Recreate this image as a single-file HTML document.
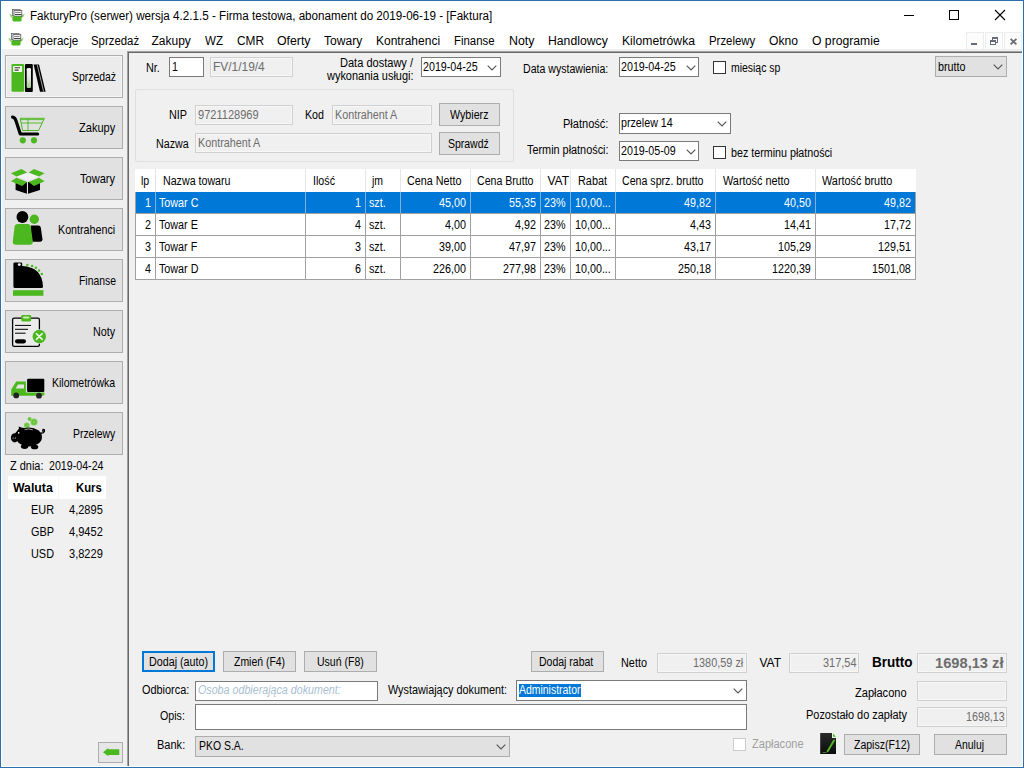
<!DOCTYPE html><html><head><meta charset="utf-8"><title>FakturyPro</title><style>
html,body{margin:0;padding:0;}body{width:1024px;height:768px;position:relative;overflow:hidden;background:#f0f0f0;font-family:"Liberation Sans", sans-serif;font-size:11px;color:#000;}
.b{position:absolute;box-sizing:border-box;}
.t{position:absolute;white-space:nowrap;line-height:1;transform-origin:0 0;}
svg{position:absolute;overflow:visible;}
</style></head><body>
<div class="b" style="left:0px;top:0px;width:1024px;height:49px;background:#fff;"></div>
<div class="b" style="left:0px;top:0px;width:1024px;height:1px;background:#2b70aa;"></div>
<div class="b" style="left:0px;top:0px;width:1px;height:768px;background:#2b70aa;"></div>
<div class="b" style="left:1023px;top:0px;width:1px;height:768px;background:#2b70aa;"></div>
<div class="b" style="left:0px;top:767px;width:1024px;height:1px;background:#2b70aa;"></div>
<svg style="left:900px;top:5px" width="120" height="22" viewBox="0 0 120 22"><g stroke="#000" stroke-width="1" fill="none" shape-rendering="crispEdges"><path d="M4 10.5H14"/><rect x="49.5" y="5.5" width="9" height="9"/></g><path d="M95 5L105 15M105 5L95 15" stroke="#000" stroke-width="1.1" fill="none"/></svg>
<div class="b" style="left:966px;top:32px;width:18px;height:18px;background:#fcfcfc;border:1px solid #ececec;"></div>
<div class="b" style="left:985px;top:32px;width:18px;height:18px;background:#fcfcfc;border:1px solid #ececec;"></div>
<div class="b" style="left:1004px;top:32px;width:18px;height:18px;background:#fcfcfc;border:1px solid #ececec;"></div>
<svg style="left:966px;top:32px" width="58" height="18" viewBox="966 32 58 18"><g fill="#666d77"><rect x="971" y="43" width="6" height="2"/></g><g stroke="#666d77" fill="none" stroke-width="1" shape-rendering="crispEdges"><path d="M992.5 40V37.5H997.5V42.5H996"/><path d="M992 38.5H998"/><rect x="990.5" y="40.5" width="5" height="4"/><path d="M990 41.5H996"/></g><path d="M1010.6 38.8L1016.4 44.4M1016.4 38.8L1010.6 44.4" stroke="#666d77" stroke-width="1.8" fill="none"/></svg>
<div class="b" style="left:127px;top:51px;width:896px;height:1px;background:#a0a0a0;"></div>
<div class="b" style="left:127px;top:51px;width:1px;height:716px;background:#a0a0a0;"></div>
<div class="b" style="left:128px;top:52px;width:895px;height:1px;background:#696969;"></div>
<div class="b" style="left:128px;top:52px;width:1px;height:714px;background:#696969;"></div>
<div class="b" style="left:1022px;top:51px;width:1px;height:716px;background:#fff;"></div>
<div class="b" style="left:127px;top:766px;width:896px;height:1px;background:#fff;"></div>
<div class="b" style="left:5px;top:55px;width:118px;height:43px;background:#ebebeb;border:1px solid #adadad;box-shadow:inset 0 0 0 1px #f6f6f6;"></div>
<div class="b" style="left:5px;top:106px;width:118px;height:43px;background:#e1e1e1;border:1px solid #adadad;"></div>
<div class="b" style="left:5px;top:157px;width:118px;height:43px;background:#e1e1e1;border:1px solid #adadad;"></div>
<div class="b" style="left:5px;top:208px;width:118px;height:43px;background:#e1e1e1;border:1px solid #adadad;"></div>
<div class="b" style="left:5px;top:259px;width:118px;height:43px;background:#e1e1e1;border:1px solid #adadad;"></div>
<div class="b" style="left:5px;top:310px;width:118px;height:43px;background:#e1e1e1;border:1px solid #adadad;"></div>
<div class="b" style="left:5px;top:361px;width:118px;height:43px;background:#e1e1e1;border:1px solid #adadad;"></div>
<div class="b" style="left:5px;top:412px;width:118px;height:43px;background:#e1e1e1;border:1px solid #adadad;"></div>
<div class="b" style="left:98px;top:742px;width:25px;height:21px;background:#e6e6e6;border:1px solid #adadad;"></div>
<svg style="left:103px;top:747px" width="17" height="10" viewBox="103 747 17 10"><path d="M103 752.2L108.3 748V749.2H119.3V755H108.3V756.2Z" fill="#4cb81f"/></svg>
<div class="b" style="left:8px;top:476px;width:98px;height:23px;background:#fff;"></div>
<div class="b" style="left:58px;top:476px;width:1px;height:23px;background:#f6f6f6;"></div>
<div class="b" style="left:169px;top:57px;width:35px;height:20px;background:#fff;border:1px solid #7a7a7a;"></div>
<div class="b" style="left:210px;top:57px;width:83px;height:20px;background:#f0f0f0;border:1px solid #d0d0d0;box-shadow:inset 0 0 0 1px #f7f7f7;"></div>
<div class="b" style="left:421px;top:57px;width:80px;height:20px;background:#fff;border:1px solid #7a7a7a;"></div>
<svg style="left:487px;top:64.5px" width="10" height="6" viewBox="0 0 10 6"><path d="M0.7 0.7L5 5L9.3 0.7" stroke="#555" stroke-width="1.15" fill="none"/></svg>
<div class="b" style="left:619px;top:57px;width:80px;height:20px;background:#fff;border:1px solid #7a7a7a;"></div>
<svg style="left:685.5px;top:64.5px" width="10" height="6" viewBox="0 0 10 6"><path d="M0.7 0.7L5 5L9.3 0.7" stroke="#555" stroke-width="1.15" fill="none"/></svg>
<div class="b" style="left:713px;top:61px;width:13px;height:13px;background:#fff;border:1px solid #333;"></div>
<div class="b" style="left:935px;top:56px;width:72px;height:21px;background:#e1e1e1;border:1px solid #adadad;"></div>
<svg style="left:993px;top:64px" width="10" height="6" viewBox="0 0 10 6"><path d="M0.7 0.7L5 5L9.3 0.7" stroke="#555" stroke-width="1.15" fill="none"/></svg>
<div class="b" style="left:135px;top:89px;width:379px;height:73px;border:1px solid #dfdfdf;border-radius:2px;"></div>
<div class="b" style="left:195px;top:105px;width:98px;height:20px;background:#f0f0f0;border:1px solid #d0d0d0;box-shadow:inset 0 0 0 1px #f7f7f7;"></div>
<div class="b" style="left:332px;top:105px;width:100px;height:20px;background:#f0f0f0;border:1px solid #d0d0d0;box-shadow:inset 0 0 0 1px #f7f7f7;"></div>
<div class="b" style="left:195px;top:133px;width:237px;height:20px;background:#f0f0f0;border:1px solid #d0d0d0;box-shadow:inset 0 0 0 1px #f7f7f7;"></div>
<div class="b" style="left:439px;top:103px;width:61px;height:23px;background:#e1e1e1;border:1px solid #adadad;"></div>
<div class="b" style="left:439px;top:132px;width:61px;height:23px;background:#e1e1e1;border:1px solid #adadad;"></div>
<div class="b" style="left:619px;top:113px;width:112px;height:21px;background:#fff;border:1px solid #7a7a7a;"></div>
<svg style="left:717px;top:121px" width="10" height="6" viewBox="0 0 10 6"><path d="M0.7 0.7L5 5L9.3 0.7" stroke="#555" stroke-width="1.15" fill="none"/></svg>
<div class="b" style="left:619px;top:141px;width:80px;height:20px;background:#fff;border:1px solid #7a7a7a;"></div>
<svg style="left:685.5px;top:148.5px" width="10" height="6" viewBox="0 0 10 6"><path d="M0.7 0.7L5 5L9.3 0.7" stroke="#555" stroke-width="1.15" fill="none"/></svg>
<div class="b" style="left:713px;top:146px;width:13px;height:13px;background:#fff;border:1px solid #333;"></div>
<div class="b" style="left:135px;top:169px;width:781px;height:23px;background:#fff;"></div>
<div class="b" style="left:135px;top:192px;width:781px;height:88px;background:#fff;"></div>
<div class="b" style="left:136px;top:192px;width:779px;height:22px;background:#0078d7;"></div>
<div class="b" style="left:155px;top:169px;width:1px;height:23px;background:#e5e5e5;"></div>
<div class="b" style="left:305px;top:169px;width:1px;height:23px;background:#e5e5e5;"></div>
<div class="b" style="left:365px;top:169px;width:1px;height:23px;background:#e5e5e5;"></div>
<div class="b" style="left:400px;top:169px;width:1px;height:23px;background:#e5e5e5;"></div>
<div class="b" style="left:470px;top:169px;width:1px;height:23px;background:#e5e5e5;"></div>
<div class="b" style="left:540px;top:169px;width:1px;height:23px;background:#e5e5e5;"></div>
<div class="b" style="left:570px;top:169px;width:1px;height:23px;background:#e5e5e5;"></div>
<div class="b" style="left:615px;top:169px;width:1px;height:23px;background:#e5e5e5;"></div>
<div class="b" style="left:715px;top:169px;width:1px;height:23px;background:#e5e5e5;"></div>
<div class="b" style="left:815px;top:169px;width:1px;height:23px;background:#e5e5e5;"></div>
<div class="b" style="left:135px;top:192px;width:1px;height:88px;background:#a0a0a0;"></div>
<div class="b" style="left:155px;top:192px;width:1px;height:88px;background:#a0a0a0;"></div>
<div class="b" style="left:305px;top:192px;width:1px;height:88px;background:#a0a0a0;"></div>
<div class="b" style="left:365px;top:192px;width:1px;height:88px;background:#a0a0a0;"></div>
<div class="b" style="left:400px;top:192px;width:1px;height:88px;background:#a0a0a0;"></div>
<div class="b" style="left:470px;top:192px;width:1px;height:88px;background:#a0a0a0;"></div>
<div class="b" style="left:540px;top:192px;width:1px;height:88px;background:#a0a0a0;"></div>
<div class="b" style="left:570px;top:192px;width:1px;height:88px;background:#a0a0a0;"></div>
<div class="b" style="left:615px;top:192px;width:1px;height:88px;background:#a0a0a0;"></div>
<div class="b" style="left:715px;top:192px;width:1px;height:88px;background:#a0a0a0;"></div>
<div class="b" style="left:815px;top:192px;width:1px;height:88px;background:#a0a0a0;"></div>
<div class="b" style="left:915px;top:192px;width:1px;height:88px;background:#a0a0a0;"></div>
<div class="b" style="left:155px;top:192px;width:1px;height:21px;background:#7fb0e0;"></div>
<div class="b" style="left:305px;top:192px;width:1px;height:21px;background:#7fb0e0;"></div>
<div class="b" style="left:365px;top:192px;width:1px;height:21px;background:#7fb0e0;"></div>
<div class="b" style="left:400px;top:192px;width:1px;height:21px;background:#7fb0e0;"></div>
<div class="b" style="left:470px;top:192px;width:1px;height:21px;background:#7fb0e0;"></div>
<div class="b" style="left:540px;top:192px;width:1px;height:21px;background:#7fb0e0;"></div>
<div class="b" style="left:570px;top:192px;width:1px;height:21px;background:#7fb0e0;"></div>
<div class="b" style="left:615px;top:192px;width:1px;height:21px;background:#7fb0e0;"></div>
<div class="b" style="left:715px;top:192px;width:1px;height:21px;background:#7fb0e0;"></div>
<div class="b" style="left:815px;top:192px;width:1px;height:21px;background:#7fb0e0;"></div>
<div class="b" style="left:135px;top:213px;width:781px;height:1px;background:#a0a0a0;"></div>
<div class="b" style="left:135px;top:235px;width:781px;height:1px;background:#a0a0a0;"></div>
<div class="b" style="left:135px;top:257px;width:781px;height:1px;background:#a0a0a0;"></div>
<div class="b" style="left:135px;top:279px;width:781px;height:1px;background:#a0a0a0;"></div>
<div class="b" style="left:142px;top:651px;width:73px;height:21px;background:#e1e1e1;border:2px solid #0078d7;"></div>
<div class="b" style="left:223px;top:651px;width:73px;height:21px;background:#e1e1e1;border:1px solid #adadad;"></div>
<div class="b" style="left:304px;top:651px;width:73px;height:21px;background:#e1e1e1;border:1px solid #adadad;"></div>
<div class="b" style="left:531px;top:651px;width:73px;height:21px;background:#e1e1e1;border:1px solid #adadad;"></div>
<div class="b" style="left:657px;top:653px;width:90px;height:20px;background:#f0f0f0;border:1px solid #d0d0d0;box-shadow:inset 0 0 0 1px #f7f7f7;"></div>
<div class="b" style="left:789px;top:653px;width:70px;height:20px;background:#f0f0f0;border:1px solid #d0d0d0;box-shadow:inset 0 0 0 1px #f7f7f7;"></div>
<div class="b" style="left:917px;top:653px;width:90px;height:20px;background:#f0f0f0;border:1px solid #d0d0d0;box-shadow:inset 0 0 0 1px #f7f7f7;"></div>
<div class="b" style="left:195px;top:681px;width:183px;height:20px;background:#fff;border:1px solid #7a7a7a;"></div>
<div class="b" style="left:516px;top:680px;width:231px;height:21px;background:#fff;border:1px solid #7a7a7a;"></div>
<div class="b" style="left:519px;top:684px;width:62px;height:13px;background:#0078d7;"></div>
<svg style="left:733px;top:688px" width="10" height="6" viewBox="0 0 10 6"><path d="M0.7 0.7L5 5L9.3 0.7" stroke="#555" stroke-width="1.15" fill="none"/></svg>
<div class="b" style="left:917px;top:681px;width:90px;height:20px;background:#f0f0f0;border:1px solid #d0d0d0;box-shadow:inset 0 0 0 1px #f7f7f7;"></div>
<div class="b" style="left:195px;top:704px;width:552px;height:26px;background:#fff;border:1px solid #7a7a7a;"></div>
<div class="b" style="left:917px;top:707px;width:90px;height:20px;background:#f0f0f0;border:1px solid #d0d0d0;box-shadow:inset 0 0 0 1px #f7f7f7;"></div>
<div class="b" style="left:195px;top:736px;width:315px;height:21px;background:#e1e1e1;border:1px solid #adadad;"></div>
<svg style="left:496px;top:744px" width="10" height="6" viewBox="0 0 10 6"><path d="M0.7 0.7L5 5L9.3 0.7" stroke="#555" stroke-width="1.15" fill="none"/></svg>
<div class="b" style="left:733px;top:738px;width:13px;height:13px;background:#fff;border:1px solid #cccccc;"></div>
<div class="b" style="left:844px;top:734px;width:76px;height:21px;background:#e1e1e1;border:1px solid #adadad;"></div>
<div class="b" style="left:934px;top:734px;width:73px;height:21px;background:#e1e1e1;border:1px solid #adadad;"></div>
<div class="b" style="left:1px;top:50px;width:1px;height:717px;background:#fff;"></div>
<div class="b" style="left:1px;top:766px;width:1022px;height:1px;background:#fff;"></div>
<svg style="left:8px;top:60px" width="44" height="36" viewBox="8 60 44 36">
<rect x="11.5" y="64" width="12.7" height="27.8" rx="1.3" fill="#4cb81f"/>
<rect x="13.1" y="65.9" width="9" height="6.2" rx="0.8" fill="#f4fbef"/>
<path d="M14.6 67.7H20M14.6 70.1H18.6" stroke="#333" stroke-width="1.1"/>
<rect x="25" y="64" width="7.8" height="28" rx="1" fill="#000"/>
<defs><linearGradient id="sg" x1="0" y1="0" x2="0" y2="1"><stop offset="0" stop-color="#f2f2f2"/><stop offset="0.5" stop-color="#e2e6df"/><stop offset="1" stop-color="#9fd388"/></linearGradient></defs><rect x="26.7" y="68" width="4.3" height="20" rx="1.2" fill="url(#sg)"/>
<path d="M33.6 64.5L39 64.5L45.6 91.8L40 91.8Z" fill="#000"/>
<path d="M37.3 65L43.6 91.5" stroke="#e8e8e8" stroke-width="0.7"/>
</svg>
<svg style="left:8px;top:110px" width="44" height="36" viewBox="8 110 44 36">
<path d="M12.6 117.2C15.2 117.4 15.6 119.4 16.4 122L20.3 134H37.6" stroke="#000" stroke-width="3.2" fill="none" stroke-linecap="round" stroke-linejoin="round"/>
<path d="M20.2 118.3H44.4L38.6 130.5H22.6Z" stroke="#4cb81f" stroke-width="1" fill="none"/>
<path d="M20.6 119.6H43.6M21.4 123H42.2M28 119V130.5" stroke="#4cb81f" stroke-width="0.9" fill="none"/>
<circle cx="22.8" cy="140.3" r="3.1" fill="#4cb81f"/><circle cx="34" cy="140.3" r="3.1" fill="#4cb81f"/>
</svg>
<svg style="left:8px;top:165px" width="44" height="32" viewBox="8 165 44 32">
<path d="M15.6 181.5V190L26.9 193.8V182Z M28 182V193.8L40 190V181.5Z" fill="#000"/>
<path d="M16.5 176.6L27.9 172.9L39 176.6L27.9 180.6Z" fill="#f2f2f2"/>
<path d="M10.9 173.2L21.5 169.1L27.1 172.6L16.5 176.4Z" fill="#4cb81f"/>
<path d="M28.7 172.6L34 169.1L44.6 173.2L39 176.4Z" fill="#4cb81f"/>
<path d="M10.9 181.3L16.5 177.8L27.1 182L22.1 186Z" fill="#4cb81f"/>
<path d="M28.7 182L39 177.8L44.6 181.3L34 186Z" fill="#4cb81f"/>
</svg>
<svg style="left:8px;top:208px" width="44" height="40" viewBox="8 208 44 40">
<path d="M31 225.4H38.4Q40.4 225.4 40.8 227.4L42.5 239.6Q42.6 241.7 40.4 241.7H31Z" fill="#000"/>
<circle cx="34.3" cy="219.2" r="4.7" fill="#4cb81f"/>
<path d="M17.8 223.9H27.6Q30.4 223.9 30.8 226.6L32.8 241.6Q33 244.8 29.8 244.8H15.8Q12.6 244.8 12.8 241.6L14.6 226.6Q15 223.9 17.8 223.9Z" fill="#4cb81f"/>
<circle cx="22.4" cy="217" r="5.9" fill="#000"/>
</svg>
<svg style="left:8px;top:260px" width="44" height="38" viewBox="8 260 44 38">
<path d="M14.8 262.4H20.8Q22.2 262.4 22.2 263.8V266Q42 267 43 286.4Q43 287.9 41.6 287.9H14.8Q13.4 287.9 13.4 286.4V263.8Q13.4 262.4 14.8 262.4Z" fill="#000"/>
<ellipse cx="19.3" cy="264.6" rx="1.5" ry="1.3" fill="#f0f0f0"/>
<g fill="#4cb81f"><circle cx="27.4" cy="264.9" r="1.25"/><circle cx="32.1" cy="265.9" r="1.25"/><circle cx="35.9" cy="267.8" r="1.25"/><circle cx="39" cy="270.6" r="1.25"/><circle cx="41.8" cy="274" r="1.25"/></g>
<rect x="13" y="290.2" width="30.4" height="5.6" fill="#4cb81f"/>
</svg>
<svg style="left:8px;top:312px" width="44" height="38" viewBox="8 312 44 38">
<rect x="12.6" y="318.2" width="26.8" height="28.2" rx="1.6" fill="#ececec" stroke="#000" stroke-width="1.3"/>
<rect x="21.2" y="315" width="10" height="6.5" rx="1.4" fill="#4cb81f"/>
<rect x="23" y="316.6" width="6.4" height="1.9" rx="0.9" fill="#c9efb4"/>
<path d="M15 325.4H31M15 329.3H28M15 333.2H25.6" stroke="#000" stroke-width="1"/>
<rect x="15" y="339.3" width="11" height="4.1" rx="2.05" fill="#000"/>
<circle cx="39.3" cy="336.5" r="7.2" fill="#e4e4e4"/>
<circle cx="39.3" cy="336.5" r="6.7" fill="#4cb81f"/>
<path d="M36.4 333.6L42.2 339.4M42.2 333.6L36.4 339.4" stroke="#eaf7e2" stroke-width="1.5" stroke-linecap="round"/>
</svg>
<svg style="left:8px;top:375px" width="44" height="26" viewBox="8 375 44 26">
<path d="M11.2 389.4L16.2 381.6H25.9V392.4H44.2L44.6 394.6L43 395.8H11.2Z" fill="#4cb81f"/>
<path d="M15.6 388.4L18 384.4H24V388.4Z" fill="#e6e6e6"/>
<rect x="27.1" y="378.8" width="17.2" height="13.1" rx="1" fill="#000"/>
<circle cx="16.2" cy="395.4" r="2.9" fill="#222"/><circle cx="39" cy="395.7" r="2.9" fill="#222"/>
</svg>
<svg style="left:8px;top:414px" width="44" height="38" viewBox="8 414 44 38">
<circle cx="26.8" cy="425.4" r="2.8" fill="#7ccf52"/><circle cx="26.8" cy="425.4" r="1.5" fill="none" stroke="#55b92a" stroke-width="0.6"/>
<circle cx="29.6" cy="418.9" r="2" fill="#6cc840"/>
<circle cx="34" cy="422" r="3.5" fill="#7ccf52"/><circle cx="34" cy="422" r="2" fill="none" stroke="#55b92a" stroke-width="0.7"/>
<ellipse cx="29" cy="437" rx="13" ry="9.6" fill="#000"/>
<ellipse cx="14.7" cy="437.8" rx="3.8" ry="4.6" fill="#000"/>
<path d="M15 433.5L19 428.5L18.6 426.6L21.4 427.6L26 428.5V436H15Z" fill="#000"/>
<ellipse cx="24.6" cy="446.6" rx="3.7" ry="2.3" fill="#000"/><ellipse cx="34.6" cy="447" rx="3.7" ry="2.3" fill="#000"/>
<path d="M41 433Q43.5 433.6 44.4 431.4Q44.8 429.4 43.4 429.4Q42.2 429.8 43 431.4" stroke="#000" stroke-width="1.3" fill="none" stroke-linecap="round"/>
<circle cx="18.7" cy="432.9" r="0.8" fill="#fff"/>
<circle cx="13.1" cy="438" r="0.6" fill="#fff"/><circle cx="15.3" cy="438" r="0.6" fill="#fff"/>
<path d="M24.6 429.6Q28.6 428.2 32.8 429.8" stroke="#e8e8e8" stroke-width="0.7" fill="none"/>
</svg>
<svg style="left:818px;top:731px" width="22" height="26" viewBox="818 731 22 26">
<defs><linearGradient id="dg" x1="0" y1="0" x2="0" y2="1"><stop offset="0" stop-color="#2a2a2a"/><stop offset="1" stop-color="#0b0b0b"/></linearGradient></defs>
<path d="M820.2 733H832L836 737.6V754H820.2Z" fill="url(#dg)"/>
<path d="M832 732.6H834L836.6 735.4V738H832Z" fill="#eaf6e3"/>
<path d="M833 733.4L835.8 736.8H833Z" fill="#4fae2a"/>
<path d="M834 740.4L827.6 751.2" stroke="#4cb81f" stroke-width="1.9" stroke-linecap="round"/>
<path d="M822.6 752.4H826.4" stroke="#7fbf60" stroke-width="0.8" opacity="0.8"/>
</svg>
<svg style="left:9px;top:8.6px" width="16" height="14" viewBox="9 8.6 16 14">
<path d="M9.3 13.2L12 14.8L12.6 17.0L21.4 17.0L22 14.8L24.7 13.2L23.6 16.2L21.8 17.6L12.2 17.6L10.4 16.2Z" fill="#8fd66d"/>
<rect x="12.4" y="9.0" width="7.6" height="6" fill="#f4f4f4" stroke="#6a6a6a" stroke-width="0.8"/>
<rect x="14" y="10.2" width="7.8" height="6" fill="#fafafa" stroke="#555" stroke-width="0.8"/>
<path d="M15.2 12.0H20.6" stroke="#555" stroke-width="0.8"/>
<path d="M15 14.2H21.6" stroke="#444" stroke-width="1.2"/>
<path d="M12.4 16.2H21.6V19.6Q21.6 21.0 20.2 21.0H13.8Q12.4 21.0 12.4 19.6Z" fill="#4cb81f"/>
</svg>
<svg style="left:7.9px;top:33.2px" width="16" height="14" viewBox="7.9 33.2 16 14">
<path d="M8.200000000000001 37.800000000000004L10.9 39.400000000000006L11.5 41.6L20.3 41.6L20.9 39.400000000000006L23.6 37.800000000000004L22.5 40.800000000000004L20.700000000000003 42.2L11.100000000000001 42.2L9.3 40.800000000000004Z" fill="#8fd66d"/>
<rect x="11.3" y="33.6" width="7.6" height="6" fill="#f4f4f4" stroke="#6a6a6a" stroke-width="0.8"/>
<rect x="12.9" y="34.800000000000004" width="7.8" height="6" fill="#fafafa" stroke="#555" stroke-width="0.8"/>
<path d="M14.100000000000001 36.6H19.5" stroke="#555" stroke-width="0.8"/>
<path d="M13.9 38.800000000000004H20.5" stroke="#444" stroke-width="1.2"/>
<path d="M11.3 40.800000000000004H20.5V44.2Q20.5 45.6 19.1 45.6H12.7Q11.3 45.6 11.3 44.2Z" fill="#4cb81f"/>
</svg>
<span class="t" id="t0" style="font-size:12px;color:#000;transform:scaleX(0.9707);left:30.00px;top:9.84px;">FakturyPro (serwer) wersja 4.2.1.5 - Firma testowa, abonament do 2019-06-19 - [Faktura]</span>
<span class="t" id="t1" style="font-size:12px;color:#000;transform:scaleX(0.9702);left:31.25px;top:35.24px;">Operacje</span>
<span class="t" id="t2" style="font-size:12px;color:#000;transform:scaleX(0.9500);left:90.92px;top:35.24px;">Sprzedaż</span>
<span class="t" id="t3" style="font-size:12px;color:#000;left:151.50px;top:35.24px;">Zakupy</span>
<span class="t" id="t4" style="font-size:12px;color:#000;transform:scaleX(0.9648);left:205.00px;top:35.24px;">WZ</span>
<span class="t" id="t5" style="font-size:12px;color:#000;transform:scaleX(0.9880);left:236.75px;top:35.24px;">CMR</span>
<span class="t" id="t6" style="font-size:12px;color:#000;transform:scaleX(1.0253);left:276.75px;top:35.24px;">Oferty</span>
<span class="t" id="t7" style="font-size:12px;color:#000;transform:scaleX(1.0062);left:324.25px;top:35.24px;">Towary</span>
<span class="t" id="t8" style="font-size:12px;color:#000;left:376.00px;top:35.24px;">Kontrahenci</span>
<span class="t" id="t9" style="font-size:12px;color:#000;transform:scaleX(0.9500);left:453.84px;top:35.24px;">Finanse</span>
<span class="t" id="t10" style="font-size:12px;color:#000;transform:scaleX(1.0300);left:508.54px;top:35.24px;">Noty</span>
<span class="t" id="t11" style="font-size:12px;color:#000;transform:scaleX(1.0178);left:548.25px;top:35.24px;">Handlowcy</span>
<span class="t" id="t12" style="font-size:12px;color:#000;transform:scaleX(1.0134);left:622.00px;top:35.24px;">Kilometrówka</span>
<span class="t" id="t13" style="font-size:12px;color:#000;transform:scaleX(0.9500);left:708.87px;top:35.24px;">Przelewy</span>
<span class="t" id="t14" style="font-size:12px;color:#000;transform:scaleX(1.0109);left:769.00px;top:35.24px;">Okno</span>
<span class="t" id="t15" style="font-size:12px;color:#000;transform:scaleX(1.0157);left:812.00px;top:35.24px;">O programie</span>
<span class="t" id="t16" style="font-size:13px;color:#000;transform:scaleX(0.8000);left:71.56px;top:69.50px;">Sprzedaż</span>
<span class="t" id="t17" style="font-size:13px;color:#000;transform:scaleX(0.8500);left:79.26px;top:120.50px;">Zakupy</span>
<span class="t" id="t18" style="font-size:13px;color:#000;transform:scaleX(0.8500);left:80.49px;top:171.50px;">Towary</span>
<span class="t" id="t19" style="font-size:13px;color:#000;transform:scaleX(0.8236);left:58.35px;top:222.50px;">Kontrahenci</span>
<span class="t" id="t20" style="font-size:13px;color:#000;transform:scaleX(0.8000);left:78.50px;top:273.50px;">Finanse</span>
<span class="t" id="t21" style="font-size:13px;color:#000;transform:scaleX(0.8285);left:93.35px;top:324.50px;">Noty</span>
<span class="t" id="t22" style="font-size:13px;color:#000;transform:scaleX(0.8093);left:52.35px;top:375.50px;">Kilometrówka</span>
<span class="t" id="t23" style="font-size:13px;color:#000;transform:scaleX(0.8000);left:73.30px;top:426.50px;">Przelewy</span>
<span class="t" id="t24" style="font-size:12px;color:#000;transform:scaleX(0.9131);left:9.50px;top:459.84px;">Z dnia:</span>
<span class="t" id="t25" style="font-size:12px;color:#000;transform:scaleX(0.8878);left:48.50px;top:459.84px;">2019-04-24</span>
<span class="t" id="t26" style="font-size:12px;color:#000;font-weight:bold;transform:scaleX(1.0221);left:13.25px;top:481.84px;">Waluta</span>
<span class="t" id="t27" style="font-size:12px;color:#000;font-weight:bold;transform:scaleX(0.9417);left:75.50px;top:481.84px;">Kurs</span>
<span class="t" id="t28" style="font-size:12px;color:#000;transform:scaleX(0.9075);left:30.50px;top:503.84px;">EUR</span>
<span class="t" id="t29" style="font-size:12px;color:#000;transform:scaleX(0.9200);left:68.50px;top:503.84px;">4,2895</span>
<span class="t" id="t30" style="font-size:12px;color:#000;transform:scaleX(0.9075);left:30.50px;top:525.84px;">GBP</span>
<span class="t" id="t31" style="font-size:12px;color:#000;transform:scaleX(0.9200);left:68.50px;top:525.84px;">4,9452</span>
<span class="t" id="t32" style="font-size:12px;color:#000;transform:scaleX(0.9075);left:30.50px;top:547.84px;">USD</span>
<span class="t" id="t33" style="font-size:12px;color:#000;transform:scaleX(0.9200);left:68.50px;top:547.84px;">3,8229</span>
<span class="t" id="t34" style="font-size:12px;color:#000;transform:scaleX(0.8994);left:145.90px;top:61.84px;">Nr.</span>
<span class="t" id="t35" style="font-size:12px;color:#000;transform:scaleX(0.8950);left:172.30px;top:60.84px;">1</span>
<span class="t" id="t36" style="font-size:12px;color:#6d6d6d;transform:scaleX(0.9946);left:213.25px;top:60.84px;">FV/1/19/4</span>
<span class="t" id="t37" style="font-size:12px;color:#000;transform:scaleX(0.9200);left:340.48px;top:56.84px;">Data dostawy /</span>
<span class="t" id="t38" style="font-size:12px;color:#000;transform:scaleX(0.9131);left:326.50px;top:69.84px;">wykonania usługi:</span>
<span class="t" id="t39" style="font-size:12px;color:#000;transform:scaleX(0.8918);left:422.75px;top:60.84px;">2019-04-25</span>
<span class="t" id="t40" style="font-size:12px;color:#000;transform:scaleX(0.8814);left:523.25px;top:62.84px;">Data wystawienia:</span>
<span class="t" id="t41" style="font-size:12px;color:#000;transform:scaleX(0.8918);left:620.75px;top:60.84px;">2019-04-25</span>
<span class="t" id="t42" style="font-size:12px;color:#000;transform:scaleX(0.8700);left:731.25px;top:61.84px;">miesiąc sp</span>
<span class="t" id="t43" style="font-size:12px;color:#000;transform:scaleX(0.8961);left:938.00px;top:60.84px;">brutto</span>
<span class="t" id="t44" style="font-size:12px;color:#000;transform:scaleX(0.8993);left:168.75px;top:108.84px;">NIP</span>
<span class="t" id="t45" style="font-size:12px;color:#6d6d6d;transform:scaleX(0.9200);left:197.75px;top:108.84px;">9721128969</span>
<span class="t" id="t46" style="font-size:12px;color:#000;transform:scaleX(0.8895);left:304.50px;top:108.84px;">Kod</span>
<span class="t" id="t47" style="font-size:12px;color:#6d6d6d;transform:scaleX(0.8971);left:335.00px;top:108.84px;">Kontrahent A</span>
<span class="t" id="t48" style="font-size:12px;color:#000;transform:scaleX(0.8927);left:155.75px;top:137.84px;">Nazwa</span>
<span class="t" id="t49" style="font-size:12px;color:#6d6d6d;transform:scaleX(0.8971);left:197.75px;top:136.84px;">Kontrahent A</span>
<span class="t" id="t50" style="font-size:12px;color:#000;transform:scaleX(0.8905);left:449.50px;top:108.84px;">Wybierz</span>
<span class="t" id="t51" style="font-size:12px;color:#000;transform:scaleX(0.8728);left:447.75px;top:137.59px;">Sprawdź</span>
<span class="t" id="t52" style="font-size:12px;color:#000;transform:scaleX(0.9200);left:563.09px;top:118.34px;">Płatność:</span>
<span class="t" id="t53" style="font-size:12px;color:#000;transform:scaleX(0.8918);left:621.25px;top:116.84px;">przelew 14</span>
<span class="t" id="t54" style="font-size:12px;color:#000;transform:scaleX(0.9051);left:527.00px;top:143.84px;">Termin płatności:</span>
<span class="t" id="t55" style="font-size:12px;color:#000;transform:scaleX(0.8918);left:620.75px;top:144.84px;">2019-05-09</span>
<span class="t" id="t56" style="font-size:12px;color:#000;transform:scaleX(0.8929);left:731.25px;top:146.84px;">bez terminu płatności</span>
<span class="t" id="t57" style="font-size:12px;color:#000;transform:scaleX(0.8829);left:141.25px;top:174.84px;">lp</span>
<span class="t" id="t58" style="font-size:12px;color:#000;transform:scaleX(0.8878);left:163.00px;top:174.84px;">Nazwa towaru</span>
<span class="t" id="t59" style="font-size:12px;color:#000;transform:scaleX(0.8911);left:312.50px;top:174.84px;">Ilość</span>
<span class="t" id="t60" style="font-size:12px;color:#000;transform:scaleX(0.8700);left:371.50px;top:174.84px;">jm</span>
<span class="t" id="t61" style="font-size:12px;color:#000;transform:scaleX(0.8978);left:407.00px;top:174.84px;">Cena Netto</span>
<span class="t" id="t62" style="font-size:12px;color:#000;transform:scaleX(0.8822);left:477.00px;top:174.84px;">Cena Brutto</span>
<span class="t" id="t63" style="font-size:12px;color:#000;left:547.50px;top:174.84px;">VAT</span>
<span class="t" id="t64" style="font-size:12px;color:#000;transform:scaleX(0.9054);left:577.50px;top:174.84px;">Rabat</span>
<span class="t" id="t65" style="font-size:12px;color:#000;transform:scaleX(0.8854);left:622.00px;top:174.84px;">Cena sprz. brutto</span>
<span class="t" id="t66" style="font-size:12px;color:#000;transform:scaleX(0.9050);left:722.90px;top:174.84px;">Wartość netto</span>
<span class="t" id="t67" style="font-size:12px;color:#000;transform:scaleX(0.9049);left:822.30px;top:174.84px;">Wartość brutto</span>
<span class="t" id="t68" style="font-size:12px;color:#fff;transform:scaleX(0.8950);left:145.11px;top:196.84px;">1</span>
<span class="t" id="t69" style="font-size:12px;color:#fff;transform:scaleX(0.8950);left:159.25px;top:196.84px;">Towar C</span>
<span class="t" id="t70" style="font-size:12px;color:#fff;transform:scaleX(0.8950);left:354.61px;top:196.84px;">1</span>
<span class="t" id="t71" style="font-size:12px;color:#fff;transform:scaleX(0.8950);left:368.70px;top:196.84px;">szt.</span>
<span class="t" id="t72" style="font-size:12px;color:#fff;transform:scaleX(0.8950);left:439.22px;top:196.84px;">45,00</span>
<span class="t" id="t73" style="font-size:12px;color:#fff;transform:scaleX(0.8950);left:509.22px;top:196.84px;">55,35</span>
<span class="t" id="t74" style="font-size:12px;color:#fff;transform:scaleX(0.8950);left:544.00px;top:196.84px;">23%</span>
<span class="t" id="t75" style="font-size:12px;color:#fff;transform:scaleX(0.8950);left:575.00px;top:196.84px;">10,00...</span>
<span class="t" id="t76" style="font-size:12px;color:#fff;transform:scaleX(0.8950);left:684.22px;top:196.84px;">49,82</span>
<span class="t" id="t77" style="font-size:12px;color:#fff;transform:scaleX(0.8950);left:784.22px;top:196.84px;">40,50</span>
<span class="t" id="t78" style="font-size:12px;color:#fff;transform:scaleX(0.8950);left:884.22px;top:196.84px;">49,82</span>
<span class="t" id="t79" style="font-size:12px;color:#000;transform:scaleX(0.8950);left:145.11px;top:218.84px;">2</span>
<span class="t" id="t80" style="font-size:12px;color:#000;transform:scaleX(0.8950);left:159.25px;top:218.84px;">Towar E</span>
<span class="t" id="t81" style="font-size:12px;color:#000;transform:scaleX(0.8950);left:354.61px;top:218.84px;">4</span>
<span class="t" id="t82" style="font-size:12px;color:#000;transform:scaleX(0.8950);left:368.70px;top:218.84px;">szt.</span>
<span class="t" id="t83" style="font-size:12px;color:#000;transform:scaleX(0.8950);left:445.19px;top:218.84px;">4,00</span>
<span class="t" id="t84" style="font-size:12px;color:#000;transform:scaleX(0.8950);left:515.19px;top:218.84px;">4,92</span>
<span class="t" id="t85" style="font-size:12px;color:#000;transform:scaleX(0.8950);left:544.00px;top:218.84px;">23%</span>
<span class="t" id="t86" style="font-size:12px;color:#000;transform:scaleX(0.8950);left:575.00px;top:218.84px;">10,00...</span>
<span class="t" id="t87" style="font-size:12px;color:#000;transform:scaleX(0.8950);left:690.19px;top:218.84px;">4,43</span>
<span class="t" id="t88" style="font-size:12px;color:#000;transform:scaleX(0.8950);left:784.22px;top:218.84px;">14,41</span>
<span class="t" id="t89" style="font-size:12px;color:#000;transform:scaleX(0.8950);left:884.22px;top:218.84px;">17,72</span>
<span class="t" id="t90" style="font-size:12px;color:#000;transform:scaleX(0.8950);left:145.11px;top:240.84px;">3</span>
<span class="t" id="t91" style="font-size:12px;color:#000;transform:scaleX(0.8950);left:159.25px;top:240.84px;">Towar F</span>
<span class="t" id="t92" style="font-size:12px;color:#000;transform:scaleX(0.8950);left:354.61px;top:240.84px;">3</span>
<span class="t" id="t93" style="font-size:12px;color:#000;transform:scaleX(0.8950);left:368.70px;top:240.84px;">szt.</span>
<span class="t" id="t94" style="font-size:12px;color:#000;transform:scaleX(0.8950);left:439.22px;top:240.84px;">39,00</span>
<span class="t" id="t95" style="font-size:12px;color:#000;transform:scaleX(0.8950);left:509.22px;top:240.84px;">47,97</span>
<span class="t" id="t96" style="font-size:12px;color:#000;transform:scaleX(0.8950);left:544.00px;top:240.84px;">23%</span>
<span class="t" id="t97" style="font-size:12px;color:#000;transform:scaleX(0.8950);left:575.00px;top:240.84px;">10,00...</span>
<span class="t" id="t98" style="font-size:12px;color:#000;transform:scaleX(0.8950);left:684.22px;top:240.84px;">43,17</span>
<span class="t" id="t99" style="font-size:12px;color:#000;transform:scaleX(0.8950);left:778.25px;top:240.84px;">105,29</span>
<span class="t" id="t100" style="font-size:12px;color:#000;transform:scaleX(0.8950);left:878.25px;top:240.84px;">129,51</span>
<span class="t" id="t101" style="font-size:12px;color:#000;transform:scaleX(0.8950);left:145.11px;top:262.84px;">4</span>
<span class="t" id="t102" style="font-size:12px;color:#000;transform:scaleX(0.8950);left:159.25px;top:262.84px;">Towar D</span>
<span class="t" id="t103" style="font-size:12px;color:#000;transform:scaleX(0.8950);left:354.61px;top:262.84px;">6</span>
<span class="t" id="t104" style="font-size:12px;color:#000;transform:scaleX(0.8950);left:368.70px;top:262.84px;">szt.</span>
<span class="t" id="t105" style="font-size:12px;color:#000;transform:scaleX(0.8950);left:433.25px;top:262.84px;">226,00</span>
<span class="t" id="t106" style="font-size:12px;color:#000;transform:scaleX(0.8950);left:503.25px;top:262.84px;">277,98</span>
<span class="t" id="t107" style="font-size:12px;color:#000;transform:scaleX(0.8950);left:544.00px;top:262.84px;">23%</span>
<span class="t" id="t108" style="font-size:12px;color:#000;transform:scaleX(0.8950);left:575.00px;top:262.84px;">10,00...</span>
<span class="t" id="t109" style="font-size:12px;color:#000;transform:scaleX(0.8950);left:678.25px;top:262.84px;">250,18</span>
<span class="t" id="t110" style="font-size:12px;color:#000;transform:scaleX(0.8950);left:772.27px;top:262.84px;">1220,39</span>
<span class="t" id="t111" style="font-size:12px;color:#000;transform:scaleX(0.8950);left:872.27px;top:262.84px;">1501,08</span>
<span class="t" id="t112" style="font-size:12px;color:#000;transform:scaleX(0.8933);left:148.75px;top:655.84px;">Dodaj (auto)</span>
<span class="t" id="t113" style="font-size:12px;color:#000;transform:scaleX(0.8700);left:233.73px;top:655.84px;">Zmień (F4)</span>
<span class="t" id="t114" style="font-size:12px;color:#000;transform:scaleX(0.8764);left:316.75px;top:655.84px;">Usuń (F8)</span>
<span class="t" id="t115" style="font-size:12px;color:#000;transform:scaleX(0.8743);left:539.25px;top:655.84px;">Dodaj rabat</span>
<span class="t" id="t116" style="font-size:12px;color:#000;transform:scaleX(0.9063);left:620.50px;top:656.84px;">Netto</span>
<span class="t" id="t117" style="font-size:12px;color:#6d6d6d;transform:scaleX(0.9072);left:693.25px;top:656.84px;">1380,59 zł</span>
<span class="t" id="t118" style="font-size:12px;color:#000;left:759.50px;top:656.84px;">VAT</span>
<span class="t" id="t119" style="font-size:12px;color:#6d6d6d;transform:scaleX(0.9127);left:823.00px;top:656.84px;">317,54</span>
<span class="t" id="t120" style="font-size:14px;color:#000;font-weight:bold;transform:scaleX(0.9643);left:872.00px;top:655.15px;">Brutto</span>
<span class="t" id="t121" style="font-size:14px;color:#6d6d6d;font-weight:bold;transform:scaleX(1.0476);left:935.00px;top:656.15px;">1698,13 zł</span>
<span class="t" id="t122" style="font-size:12px;color:#000;transform:scaleX(0.9081);left:142.00px;top:683.84px;">Odbiorca:</span>
<span class="t" id="t123" style="font-size:12px;color:#a9c0d2;font-style:italic;transform:scaleX(0.8916);left:198.25px;top:683.84px;">Osoba odbierająca dokument:</span>
<span class="t" id="t124" style="font-size:12px;color:#000;transform:scaleX(0.9018);left:387.50px;top:683.84px;">Wystawiający dokument:</span>
<span class="t" id="t125" style="font-size:12px;color:#fff;transform:scaleX(0.8700);left:519.00px;top:683.84px;">Administrator</span>
<span class="t" id="t126" style="font-size:12px;color:#000;transform:scaleX(0.9200);left:854.94px;top:686.84px;">Zapłacono</span>
<span class="t" id="t127" style="font-size:12px;color:#000;transform:scaleX(0.8888);left:160.10px;top:709.84px;">Opis:</span>
<span class="t" id="t128" style="font-size:12px;color:#000;transform:scaleX(0.9120);left:805.50px;top:709.34px;">Pozostało do zapłaty</span>
<span class="t" id="t129" style="font-size:12px;color:#6d6d6d;transform:scaleX(0.8931);left:965.50px;top:710.84px;">1698,13</span>
<span class="t" id="t130" style="font-size:12px;color:#000;transform:scaleX(0.9189);left:156.80px;top:738.84px;">Bank:</span>
<span class="t" id="t131" style="font-size:12px;color:#000;transform:scaleX(0.8700);left:199.25px;top:739.84px;">PKO S.A.</span>
<span class="t" id="t132" style="font-size:12px;color:#a0a0a0;transform:scaleX(0.9200);left:752.00px;top:737.84px;">Zapłacone</span>
<span class="t" id="t133" style="font-size:12px;color:#000;transform:scaleX(0.8748);left:853.75px;top:738.84px;">Zapisz(F12)</span>
<span class="t" id="t134" style="font-size:12px;color:#000;transform:scaleX(0.8700);left:954.74px;top:738.84px;">Anuluj</span>
</body></html>
